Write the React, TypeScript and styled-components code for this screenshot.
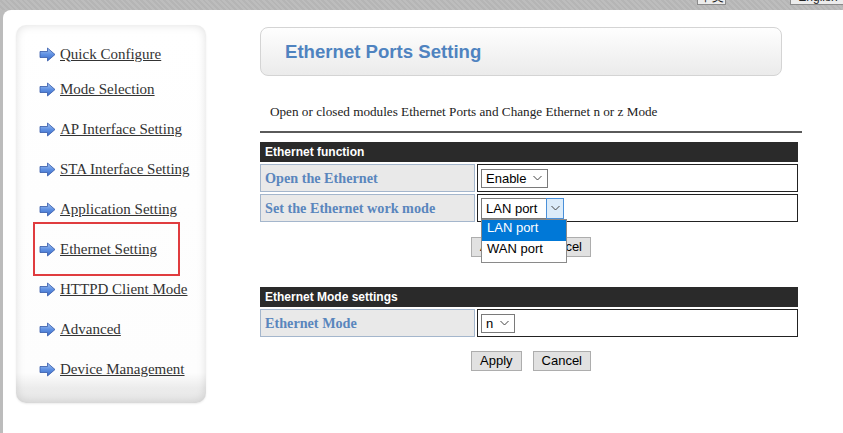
import React from "react";
import styled, { createGlobalStyle } from "styled-components";

const GlobalStyle = createGlobalStyle`
  html, body {
    margin: 0;
    padding: 0;
    background: #bcbcbc;
  }
  body {
    width: 843px;
    height: 433px;
    overflow: hidden;
    font-family: "Liberation Serif", "Times New Roman", serif;
  }
`;

const menu = [
  "Quick Configure",
  "Mode Selection",
  "AP Interface Setting",
  "STA Interface Setting",
  "Application Setting",
  "Ethernet Setting",
  "HTTPD Client Mode",
  "Advanced",
  "Device Management",
];

const ArrowIcon = () => (
  <svg width="17" height="15" viewBox="0 0 17 15">
    <defs>
      <linearGradient id="arr" x1="0" y1="0" x2="0" y2="1">
        <stop offset="0" stopColor="#a4c4f2" />
        <stop offset="0.5" stopColor="#5f90e2" />
        <stop offset="1" stopColor="#386ac6" />
      </linearGradient>
    </defs>
    <polygon
      points="1,4.5 8.5,4.5 8.5,1 16,7.5 8.5,14 8.5,10.5 1,10.5"
      fill="url(#arr)"
      stroke="#3559a8"
      strokeWidth="0.8"
      strokeLinejoin="round"
    />
  </svg>
);

const Chevron = () => (
  <svg width="9" height="6" viewBox="0 0 9 6">
    <polyline points="0.5,1 4.5,5 8.5,1" fill="none" stroke="#444" strokeWidth="1" />
  </svg>
);

export default function App() {
  return (
    <>
      <GlobalStyle />
      <TopBar>
        <LangButton>中文</LangButton>
        <LangButton $wide>English</LangButton>
      </TopBar>
      <Page>
        <Sidebar>
          {menu.map((item, i) => (
            <NavItem key={item} $first={i === 0} $active={item === "Ethernet Setting"}>
              <ArrowIcon />
              <NavLink href="#">{item}</NavLink>
            </NavItem>
          ))}
        </Sidebar>

        <Main>
          <TitleBox>
            <Title>Ethernet Ports Setting</Title>
          </TitleBox>
          <Desc>
            Open or closed modules Ethernet Ports and Change Ethernet n or z Mode
          </Desc>
          <Rule />

          <Section>
            <SectionHeader>Ethernet function</SectionHeader>
            <Row>
              <LabelCell>Open the Ethernet</LabelCell>
              <ValueCell>
                <Select $width={67}>
                  <SelectText>Enable</SelectText>
                  <Chevron />
                </Select>
              </ValueCell>
            </Row>
            <Row>
              <LabelCell>Set the Ethernet work mode</LabelCell>
              <ValueCell>
                <DropWrap>
                  <Select $width={83} $open>
                    <SelectText>LAN port</SelectText>
                    <OpenArrow>
                      <Chevron />
                    </OpenArrow>
                  </Select>
                  <OptionList>
                    <Option $selected>LAN port</Option>
                    <Option>WAN port</Option>
                  </OptionList>
                </DropWrap>
              </ValueCell>
            </Row>
          </Section>
          <Buttons $top={15}>
            <Button>Apply</Button>
            <Button>Cancel</Button>
          </Buttons>

          <Section $top={30}>
            <SectionHeader>Ethernet Mode settings</SectionHeader>
            <Row>
              <LabelCell>Ethernet Mode</LabelCell>
              <ValueCell>
                <Select $width={34}>
                  <SelectText>n</SelectText>
                  <Chevron />
                </Select>
              </ValueCell>
            </Row>
          </Section>
          <Buttons $top={14}>
            <Button>Apply</Button>
            <Button>Cancel</Button>
          </Buttons>
        </Main>
      </Page>
    </>
  );
}

const TopBar = styled.div`
  height: 10px;
  overflow: hidden;
  display: flex;
  align-items: flex-end;
  justify-content: flex-end;
  gap: 64px;
  background: repeating-linear-gradient(45deg, #bdbdbd 0 2px, #b5b5b5 2px 4px);
`;

const LangButton = styled.div<{ $wide?: boolean }>`
  width: ${(p) => (p.$wide ? "56px" : "29px")};
  height: 16px;
  margin-bottom: 5px;
  margin-right: ${(p) => (p.$wide ? "-3px" : "0")};
  box-sizing: border-box;
  border: 1px solid #8a8a8a;
  background: #ececec;
  font: 12px "Liberation Sans", Arial, sans-serif;
  color: #222;
  text-align: center;
  line-height: 14px;
`;

const Page = styled.div`
  margin-left: 3px;
  height: 423px;
  box-sizing: border-box;
  background: #fff;
  border-top-left-radius: 8px;
  padding: 15px 0 0 13px;
  display: flex;
  align-items: flex-start;
  gap: 54px;
`;

const Sidebar = styled.div`
  width: 190px;
  height: 378px;
  box-sizing: border-box;
  padding: 14px 0 14px 23px;
  border-radius: 10px;
  background: linear-gradient(to bottom, #ffffff 0%, #fdfdfd 92%, #ececec 96%, #e6e6e6 100%);
  box-shadow: inset 0 0 10px rgba(0, 0, 0, 0.13), 0 1px 2px rgba(0, 0, 0, 0.08);
  display: flex;
  flex-direction: column;
`;

const NavItem = styled.div<{ $first?: boolean; $active?: boolean }>`
  position: relative;
  height: ${(p) => (p.$first ? "30px" : "40px")};
  display: flex;
  align-items: center;
  gap: 4px;

  ${(p) =>
    p.$active &&
    `
    &::after {
      content: "";
      position: absolute;
      left: -6px;
      top: -7px;
      width: 147px;
      height: 54px;
      box-sizing: border-box;
      border: 2px solid #e03c3f;
    }
  `}
`;

const NavLink = styled.a`
  font-size: 15px;
  color: #333;
  text-decoration: underline;
  white-space: nowrap;
`;

const Main = styled.div`
  width: 542px;
  padding-top: 2px;
  display: flex;
  flex-direction: column;
`;

const TitleBox = styled.div`
  width: 522px;
  height: 49px;
  box-sizing: border-box;
  border: 1px solid #d4d4d4;
  border-radius: 8px;
  background: linear-gradient(to bottom, #fefefe, #ebebeb);
  display: flex;
  align-items: center;
  padding-left: 24px;
`;

const Title = styled.div`
  font: bold 18.6px "Liberation Sans", Arial, sans-serif;
  color: #4f83c0;
`;

const Desc = styled.div`
  margin-top: 26px;
  padding-left: 10px;
  line-height: 20px;
  font-size: 13.2px;
  color: #222;
`;

const Rule = styled.div`
  margin-top: 9px;
  height: 2px;
  background: #5a5a5a;
`;

const Section = styled.div<{ $top?: number }>`
  width: 538px;
  margin-top: ${(p) => p.$top ?? 9}px;
  display: flex;
  flex-direction: column;
  gap: 2px;
`;

const SectionHeader = styled.div`
  height: 20px;
  background: #2a2a2a;
  color: #fff;
  font: bold 12px "Liberation Sans", Arial, sans-serif;
  line-height: 20px;
  padding-left: 5px;
`;

const Row = styled.div`
  display: grid;
  grid-template-columns: 215px 321px;
  gap: 2px;
  height: 28px;
`;

const LabelCell = styled.div`
  box-sizing: border-box;
  border: 1px solid #a4b6cc;
  background: #e9e9e9;
  padding-left: 4px;
  display: flex;
  align-items: center;
  font-weight: bold;
  font-size: 14.2px;
  color: #5a86bd;
`;

const ValueCell = styled.div`
  box-sizing: border-box;
  border: 1px solid #222;
  padding-left: 3px;
  display: flex;
  align-items: center;
`;

const DropWrap = styled.div`
  position: relative;
  display: flex;
`;

const Select = styled.div<{ $width: number; $open?: boolean }>`
  width: ${(p) => p.$width}px;
  height: ${(p) => (p.$open ? 21 : 19)}px;
  box-sizing: border-box;
  border: 1px solid #7a7a7a;
  background: #fff;
  display: flex;
  align-items: center;
  justify-content: space-between;
  padding: ${(p) => (p.$open ? "0 0 0 4px" : "0 5px 0 4px")};
  font: 13px "Liberation Sans", Arial, sans-serif;
  color: #000;
`;

const SelectText = styled.span`
  white-space: nowrap;
`;

const OpenArrow = styled.span`
  align-self: stretch;
  width: 18px;
  margin: -1px -1px -1px 0;
  box-sizing: border-box;
  border: 1px solid #4a90d9;
  background: #dcecfa;
  display: flex;
  align-items: center;
  justify-content: center;
`;

const OptionList = styled.div`
  position: absolute;
  left: 0;
  top: 21px;
  z-index: 2;
  width: 86px;
  box-sizing: border-box;
  border: 1px solid #8a8a8a;
  background: #fff;
`;

const Option = styled.div<{ $selected?: boolean }>`
  height: 21px;
  line-height: 21px;
  padding-left: 5px;
  font: 13px "Liberation Sans", Arial, sans-serif;
  background: ${(p) => (p.$selected ? "#0078d7" : "#fff")};
  color: ${(p) => (p.$selected ? "#fff" : "#000")};
`;

const Buttons = styled.div<{ $top: number }>`
  width: 542px;
  margin-top: ${(p) => p.$top}px;
  display: flex;
  justify-content: center;
  gap: 11px;
`;

const Button = styled.button`
  height: 20px;
  padding: 0 8px;
  border: 1px solid #adadad;
  background: #e1e1e1;
  font: 13px "Liberation Sans", Arial, sans-serif;
  color: #000;
  line-height: 18px;
`;
